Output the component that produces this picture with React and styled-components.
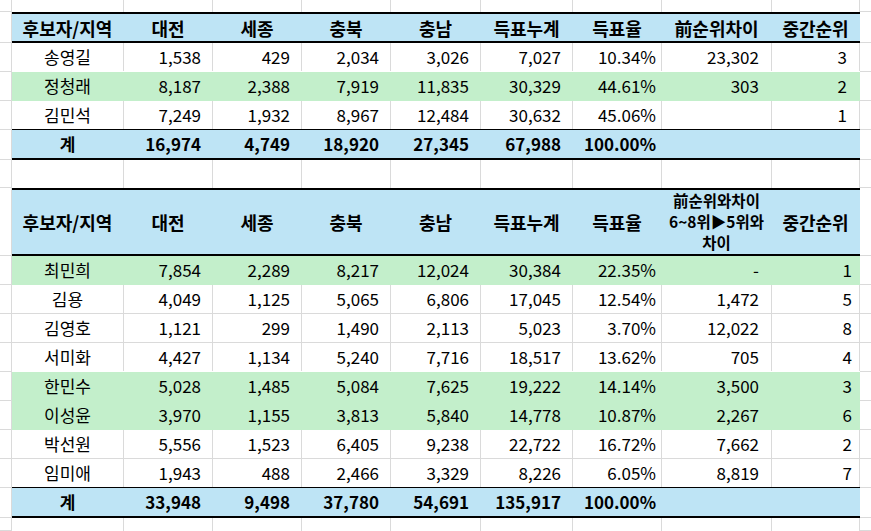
import React from 'react';
import styled, { createGlobalStyle } from 'styled-components';

const GRID = '#dadada';
const BLUE = '#bee4f5';
const GREEN = '#c3efcb';
const WIDTHS = [112, 89, 89, 89, 90, 92, 89, 110, 88];

const GlobalStyle = createGlobalStyle`
  html, body { margin: 0; padding: 0; background: #fff; }
  body {
    font-family: "Noto Sans CJK KR", "Noto Sans", sans-serif;
    color: #000;
  }
`;

const Sheet = styled.div`
  width: 871px;
  height: 531px;
  overflow: hidden;
  display: flex;
  flex-direction: column;
`;

const Row = styled.div`
  display: flex;
  flex-shrink: 0;
  height: ${p => (p.$h ? `${p.$h}px` : 'auto')};
  flex-grow: ${p => (p.$h ? 0 : 1)};
`;

const Gutter = styled.div`
  width: 12px;
  flex-shrink: 0;
  box-sizing: border-box;
  border-right: 1px solid ${GRID};
  border-bottom: 1px solid ${GRID};
`;

const Tail = styled.div`
  flex: 1;
  box-sizing: border-box;
  border-bottom: 1px solid ${GRID};
`;

const Band = styled.div`
  display: flex;
  width: 848px;
  flex-shrink: 0;
  box-sizing: border-box;
  background: ${p => p.$fill || '#fff'};
  border-top: ${p => p.$top || 'none'};
  border-bottom: ${p => p.$bottom || 'none'};
`;

const Cell = styled.div`
  width: ${p => p.$w}px;
  flex-shrink: 0;
  box-sizing: border-box;
  display: flex;
  align-items: center;
  white-space: nowrap;
  font-size: 17px;
  line-height: 20px;
  border-right: 1px solid ${p => (p.$grid ? GRID : 'transparent')};
  font-weight: ${p => (p.$bold ? 700 : 400)};
`;

const HeadCell = styled(Cell)`
  justify-content: center;
  font-size: 18px;
  font-weight: 700;
  text-align: center;
`;

const SmallHead = styled.span`
  font-size: 15.5px;
  line-height: 21px;
  margin-top: -2px;
`;

const NameCell = styled(Cell)`
  justify-content: center;
`;

const NumCell = styled(Cell)`
  justify-content: flex-end;
  padding-right: ${p => p.$pad}px;
`;

const EmptyBand = ({ bottom }) => (
  <Band $bottom={bottom}>
    {WIDTHS.map((w, i) => (
      <Cell key={i} $w={w} $grid />
    ))}
  </Band>
);

const Line = ({ h, children }) => (
  <Row $h={h}>
    <Gutter />
    {children}
    <Tail />
  </Row>
);

const PADS = [11, 11, 11, 11, 11, 5, 12];

const DataRow = ({ row, fill, bottom, rankPad, bold }) => {
  const [name, ...vals] = row;
  const grid = !fill;
  return (
    <Band $fill={fill} $bottom={bottom}>
      <NameCell $w={WIDTHS[0]} $grid={grid} $bold={bold}>{name}</NameCell>
      {vals.map((v, i) => (
        <NumCell
          key={i}
          $w={WIDTHS[i + 1]}
          $grid={grid}
          $bold={bold}
          $pad={i === 7 ? rankPad : PADS[i]}
        >
          {v}
        </NumCell>
      ))}
    </Band>
  );
};

const HEAD1 = ['후보자/지역', '대전', '세종', '충북', '충남', '득표누계', '득표율', '前순위차이', '중간순위'];

const TABLE1 = [
  { row: ['송영길', '1,538', '429', '2,034', '3,026', '7,027', '10.34%', '23,302', '3'] },
  { row: ['정청래', '8,187', '2,388', '7,919', '11,835', '30,329', '44.61%', '303', '2'], fill: GREEN },
  { row: ['김민석', '7,249', '1,932', '8,967', '12,484', '30,632', '45.06%', '', '1'] },
];
const TOTAL1 = ['계', '16,974', '4,749', '18,920', '27,345', '67,988', '100.00%', '', ''];

const TABLE2 = [
  { row: ['최민희', '7,854', '2,289', '8,217', '12,024', '30,384', '22.35%', '-', '1'], fill: GREEN },
  { row: ['김용', '4,049', '1,125', '5,065', '6,806', '17,045', '12.54%', '1,472', '5'] },
  { row: ['김영호', '1,121', '299', '1,490', '2,113', '5,023', '3.70%', '12,022', '8'] },
  { row: ['서미화', '4,427', '1,134', '5,240', '7,716', '18,517', '13.62%', '705', '4'] },
  { row: ['한민수', '5,028', '1,485', '5,084', '7,625', '19,222', '14.14%', '3,500', '3'], fill: GREEN },
  { row: ['이성윤', '3,970', '1,155', '3,813', '5,840', '14,778', '10.87%', '2,267', '6'], fill: GREEN },
  { row: ['박선원', '5,556', '1,523', '6,405', '9,238', '22,722', '16.72%', '7,662', '2'] },
  { row: ['임미애', '1,943', '488', '2,466', '3,329', '8,226', '6.05%', '8,819', '7'] },
];
const TOTAL2 = ['계', '33,948', '9,498', '37,780', '54,691', '135,917', '100.00%', '', ''];

const bottomFor = (rows, i) => {
  const cur = rows[i];
  const next = rows[i + 1];
  if (!next) return '1px solid #000';
  if (cur.fill) return `1px solid ${cur.fill}`;
  if (next.fill) return '1px solid #fff';
  return `1px solid ${GRID}`;
};

function App() {
  return (
    <Sheet>
      <GlobalStyle />
      <Line h={12}>
        <EmptyBand />
      </Line>

      <Line h={31}>
        <Band $fill={BLUE} $top="2px solid #000" $bottom="2px solid #000">
          {HEAD1.map((t, i) => (
            <HeadCell key={i} $w={WIDTHS[i]}>{t}</HeadCell>
          ))}
        </Band>
      </Line>
      {TABLE1.map((r, i) => (
        <Line h={29} key={i}>
          <DataRow row={r.row} fill={r.fill} bottom={bottomFor(TABLE1, i)} rankPad={12} />
        </Line>
      ))}
      <Line h={30}>
        <DataRow row={TOTAL1} fill={BLUE} bottom="2px solid #000" rankPad={12} bold />
      </Line>

      <Line h={28}>
        <EmptyBand />
      </Line>

      <Line h={68}>
        <Band $fill={BLUE} $top="2px solid #000" $bottom="2px solid #000">
          {HEAD1.map((t, i) => (
            <HeadCell key={i} $w={WIDTHS[i]}>
              {i === 7 ? (
                <SmallHead>
                  前순위와차이
                  <br />
                  6~8위▶5위와
                  <br />
                  차이
                </SmallHead>
              ) : (
                t
              )}
            </HeadCell>
          ))}
        </Band>
      </Line>
      {TABLE2.map((r, i) => (
        <Line h={29} key={i}>
          <DataRow row={r.row} fill={r.fill} bottom={bottomFor(TABLE2, i)} rankPad={7} />
        </Line>
      ))}
      <Line h={30}>
        <DataRow row={TOTAL2} fill={BLUE} bottom="2px solid #000" rankPad={7} bold />
      </Line>

      <Line>
        <EmptyBand />
      </Line>
    </Sheet>
  );
}

export default App;
